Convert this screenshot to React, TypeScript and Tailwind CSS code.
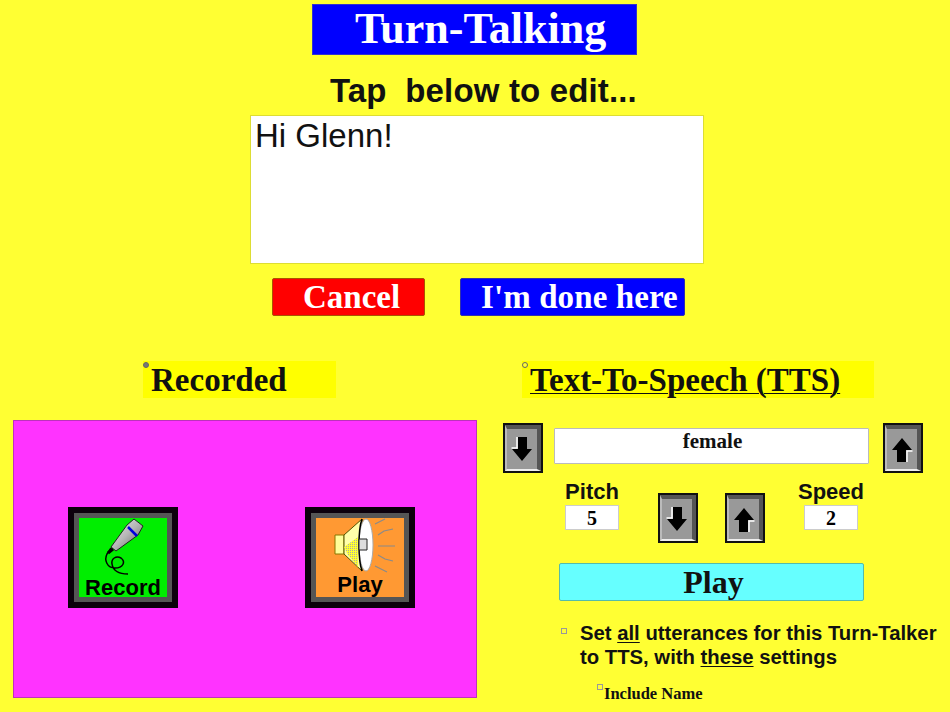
import type { ReactNode } from 'react';

const SERIF = "font-['Liberation_Serif',serif]";
const SANS = "font-['Liberation_Sans',sans-serif]";

function ArrowButton({ up = false }: { up?: boolean }) {
  return (
    <button type="button" className="h-[50px] w-[40px] shrink-0 border-2 border-[#111] bg-[#999]">
      <div className="flex h-full w-full items-center justify-center border-t-[4px] border-r-[4px] border-b-[2px] border-l-[2px] border-t-[#555] border-r-[#555] border-b-[#eee] border-l-[#bbb] bg-[#999]">
        <svg width="24" height="27" viewBox="0 0 24 27" className={up ? 'rotate-180' : ''}>
          <path d="M8 1h9v12h5L12 25 2 13h6z" fill="#000" />
          <path d="M7 1v11H1.500" fill="none" stroke="#fff" strokeWidth="1.500" />
        </svg>
      </div>
    </button>
  );
}

function IconTile({ bg, label, icon }: { bg: string; label: string; icon: ReactNode }) {
  return (
    <button type="button" className="h-[101px] w-[110px] shrink-0 border-[6px] border-[#0c000c]">
      <div className="h-full w-full border-[5px] border-[#555]">
        <div className={`flex h-full w-full flex-col items-center ${bg}`}>
          {icon}
          <span className={`${SANS} text-[22px] leading-[22px] font-bold text-black`}>{label}</span>
        </div>
      </div>
    </button>
  );
}

function MicIcon() {
  return (
    <svg width="88" height="59" viewBox="0 0 88 59" className="shrink-0">
      <defs>
        <linearGradient id="silver" x1="0" y1="0" x2="1" y2="1">
          <stop offset="0" stopColor="#eee" />
          <stop offset="0.5" stopColor="#b5b5b5" />
          <stop offset="1" stopColor="#555" />
        </linearGradient>
      </defs>
      <path d="M32 30 28 36C25 42 28 50 36 50 44 50 47 44 42 40 37 37 32 41 33 46 34 52 38 56 49 56" fill="none" stroke="#000" strokeWidth="1.500" />
      <path d="M48 7 55 1 64 8 59 17 37 33 32 29Z" fill="url(#silver)" stroke="#222" strokeWidth="1" />
      <path d="M49 9 58 18" stroke="#0000dd" strokeWidth="2.500" />
      <path d="M34 31 29 35" stroke="#000" strokeWidth="3" />
    </svg>
  );
}

function SpeakerIcon() {
  return (
    <svg width="88" height="56" viewBox="0 0 88 56" className="shrink-0">
      <defs>
        <pattern id="dither" width="2" height="2" patternUnits="userSpaceOnUse">
          <rect width="2" height="2" fill="#ffff33" />
          <rect width="1" height="1" fill="#aaa" />
        </pattern>
      </defs>
      <path d="M19 17h9v19h-9z" fill="#ffff99" stroke="#887700" strokeWidth="1" />
      <path d="M28 17 46 1v52L28 36Z" fill="#ffffaa" stroke="#555500" strokeWidth="1" />
      <path d="M28 29 42 19v30L32 37Z" fill="url(#dither)" />
      <ellipse cx="50" cy="27" rx="7" ry="26" fill="#fff" stroke="#aaa" strokeWidth="1" />
      <path d="M46 1C42 12 42 42 46 53" fill="none" stroke="#000" strokeWidth="1.500" />
      <path d="M43 21h8v11h-8z" fill="#ddd" stroke="#222" strokeWidth="1" />
      <g stroke="#8a8a8a" strokeWidth="1.200">
        <path d="M59 6 69 1M62 17l6-4 9-2M62 28h17M62 37l7 4 8 2M59 48l12 6" fill="none" />
      </g>
    </svg>
  );
}

function Heading({ children, dot, wide }: { children: ReactNode; dot: string; wide?: boolean }) {
  return (
    <div className={`relative flex h-[37px] items-center bg-[#ffff00] pt-[1px] ${wide ? 'w-[352px] pl-2' : 'w-[193px] pl-[8px]'}`}>
      <span className={`absolute top-[1px] left-0 size-[6px] rounded-full border border-[#666] ${dot}`} />
      <h2 className={`${SERIF} text-[33px] leading-none font-bold whitespace-nowrap text-[#111]`}>{children}</h2>
    </div>
  );
}

function ValueBox({ value }: { value: string }) {
  return (
    <div className={`${SERIF} mt-[1px] flex h-[25px] w-[54px] shrink-0 items-center justify-center border border-[#ccc] bg-white text-[20px] font-bold text-black`}>
      {value}
    </div>
  );
}

export default function App() {
  return (
    <div className="flex h-[712px] w-[950px] flex-col overflow-hidden bg-[#ffff33] pt-1">
      <div className="ml-[312px] flex h-[51px] w-[325px] items-center border border-[#3333cc] bg-[#0000ff] pb-[2px] pl-[42px]">
        <h1 className={`${SERIF} text-[44px] leading-none font-bold whitespace-nowrap text-white`}>Turn-Talking</h1>
      </div>

      <p className={`${SANS} mt-[17px] ml-[330px] text-[33px] leading-[38px] font-bold tracking-[0.15px] whitespace-pre text-[#111]`}>Tap  below to edit...</p>

      <div className={`${SANS} mt-[5px] ml-[250px] h-[149px] w-[454px] border border-[#dddd33] bg-white pl-[4px] text-[33px] leading-[40px] text-[#111]`}>
        Hi Glenn!
      </div>

      <div className="mt-[14px] ml-[272px] flex gap-[35px]">
        <button type="button" className={`${SERIF} h-[38px] w-[153px] rounded-[2px] border border-[#aa5500] bg-[#ff0000] pl-[30px] text-left text-[33px] leading-none font-bold text-white`}>
          Cancel
        </button>
        <button type="button" className={`${SERIF} h-[38px] w-[225px] rounded-[2px] border border-[#3333aa] bg-[#0000ff] pl-[20px] text-left text-[33px] leading-none font-bold tracking-[0.1px] whitespace-nowrap text-white`}>
          I'm done here
        </button>
      </div>

      <div className="mt-[45px] flex">
        <section className="w-[503px] shrink-0 pl-[13px]">
          <div className="ml-[130px]">
            <Heading dot="bg-[#777]">Recorded</Heading>
          </div>
          <div className="mt-[22px] flex h-[278px] w-[464px] items-start gap-[127px] border border-[#bb33bb] bg-[#ff33ff] pt-[86px] pl-[54px]">
            <IconTile bg="bg-[#00ee00]" label="Record" icon={<MicIcon />} />
            <IconTile bg="bg-[#ff9933]" label="Play" icon={<SpeakerIcon />} />
          </div>
        </section>

        <section className="flex-1">
          <div className="ml-[19px]">
            <Heading dot="bg-[#ffff33]" wide>
              <span className="underline decoration-1 underline-offset-2">Text-To-Speech (TTS)</span>
            </Heading>
          </div>

          <div className="mt-[25px] flex items-start gap-[11px]">
            <ArrowButton />
            <div className={`${SERIF} mt-[5px] h-[36px] w-[315px] rounded-[1px] border border-[#bbb] bg-white pl-[2px] text-center text-[21px] leading-[24px] font-bold text-[#111]`}>
              female
            </div>
            <div className="ml-[3px]">
              <ArrowButton up />
            </div>
          </div>

          <div className="mt-[20px] ml-[62px] flex items-start">
            <div className="-mt-[14px] flex w-[54px] flex-col items-center">
              <span className={`${SANS} text-[22px] leading-[25px] font-bold text-[#111]`}>Pitch</span>
              <ValueBox value="5" />
            </div>
            <div className="ml-[39px] flex gap-[28px]">
              <ArrowButton />
              <div className="-ml-[1px]">
                <ArrowButton up />
              </div>
            </div>
            <div className="-mt-[14px] ml-[39px] flex w-[54px] flex-col items-center">
              <span className={`${SANS} text-[22px] leading-[25px] font-bold whitespace-nowrap text-[#111]`}>Speed</span>
              <ValueBox value="2" />
            </div>
          </div>

          <button type="button" className={`${SERIF} mt-[20px] ml-[56px] block h-[38px] w-[305px] rounded-[2px] border border-[#55bbaa] bg-[#66ffff] pl-1 text-[32px] leading-none font-bold text-[#111]`}>
            Play
          </button>

          <div className="relative mt-[20px] ml-[77px]">
            <span className="absolute top-[7px] left-[-19px] size-[6px] border border-[#999] bg-[#ffff33]" />
            <p className={`${SANS} text-[20.300px] leading-[24px] font-bold whitespace-nowrap text-[#111]`}>
              Set <span className="underline decoration-1 underline-offset-2">all</span> utterances for this Turn-Talker
              <br />
              to TTS, with <span className="underline decoration-1 underline-offset-2">these</span> settings
            </p>
          </div>

          <div className="relative mt-[16px] ml-[101px]">
            <span className="absolute top-[-1px] left-[-7px] size-[6px] border border-[#999] bg-[#ffff33]" />
            <p className={`${SERIF} text-[16.500px] leading-[18px] font-bold text-[#111]`}>Include Name</p>
          </div>
        </section>
      </div>
    </div>
  );
}
